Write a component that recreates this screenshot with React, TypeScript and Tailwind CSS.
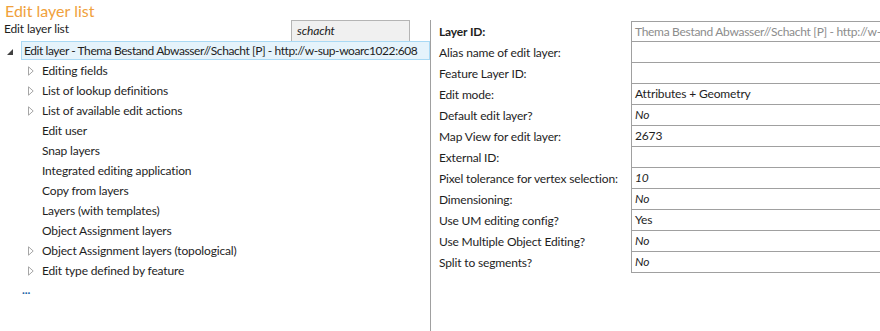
import React from 'react';

const treeItems: { label: string; arrow: boolean }[] = [
  { label: 'Editing fields', arrow: true },
  { label: 'List of lookup definitions', arrow: true },
  { label: 'List of available edit actions', arrow: true },
  { label: 'Edit user', arrow: false },
  { label: 'Snap layers', arrow: false },
  { label: 'Integrated editing application', arrow: false },
  { label: 'Copy from layers', arrow: false },
  { label: 'Layers (with templates)', arrow: false },
  { label: 'Object Assignment layers', arrow: false },
  { label: 'Object Assignment layers (topological)', arrow: true },
  { label: 'Edit type defined by feature', arrow: true },
];

type Prop = { label: string; value: string; bold?: boolean; kind?: 'ro' | 'default' | 'set' };

const props: Prop[] = [
  { label: 'Layer ID:', value: 'Thema Bestand Abwasser//Schacht [P] - http://w-sup-woarc1022:608', bold: true, kind: 'ro' },
  { label: 'Alias name of edit layer:', value: '' },
  { label: 'Feature Layer ID:', value: '' },
  { label: 'Edit mode:', value: 'Attributes + Geometry', kind: 'set' },
  { label: 'Default edit layer?', value: 'No', kind: 'default' },
  { label: 'Map View for edit layer:', value: '2673', kind: 'set' },
  { label: 'External ID:', value: '' },
  { label: 'Pixel tolerance for vertex selection:', value: '10', kind: 'default' },
  { label: 'Dimensioning:', value: 'No', kind: 'default' },
  { label: 'Use UM editing config?', value: 'Yes', kind: 'set' },
  { label: 'Use Multiple Object Editing?', value: 'No', kind: 'default' },
  { label: 'Split to segments?', value: 'No', kind: 'default' },
];

function CollapsedArrow() {
  return (
    <svg width="6" height="10" viewBox="0 0 6 10" className="shrink-0">
      <path d="M0.5 0.8 L5.2 5 L0.5 9.2 Z" fill="none" stroke="#a6a6a6" strokeWidth="1" />
    </svg>
  );
}

function ExpandedArrow() {
  return (
    <svg width="6" height="6" viewBox="0 0 6 6" className="shrink-0">
      <path d="M6 0 L6 6 L0 6 Z" fill="#404040" />
    </svg>
  );
}

export default function App() {
  return (
    <div
      className="w-[880px] h-[331px] bg-white overflow-hidden text-[12px] tracking-[-0.15px] text-[#1e1e1e]"
      style={{ fontFamily: '"Segoe UI", Lato, "Open Sans", sans-serif' }}
    >
      {/* Title */}
      <div className="h-[20px] pl-[5px] text-[16px] leading-[21px] tracking-normal text-[#f0a13c] whitespace-nowrap">
        Edit layer list
      </div>

      <div className="flex h-[311px]">
        {/* Left: tree */}
        <div className="w-[431px] shrink-0 border-r border-[#a0a0a0]">
          <div className="flex h-[21px]">
            <div className="w-[291px] pl-[4px] leading-[17px] whitespace-nowrap">Edit layer list</div>
            <div className="w-[119px] h-[22px] bg-[#f0f0f0] border border-[#b4b4b4] pl-[5px] leading-[19px] italic">
              schacht
            </div>
          </div>

          <div className="flex items-center h-[19px]">
            <div className="w-[21px] flex justify-end pr-[8px] pt-[2px]">
              <ExpandedArrow />
            </div>
            <div className="flex-1 h-[19px] bg-[#e5f3fb] border border-[#a9d9f4] pl-[2px] leading-[17px] tracking-[-0.42px] whitespace-nowrap overflow-hidden">
              Edit layer - Thema Bestand Abwasser//Schacht [P] - http://w-sup-woarc1022:608
            </div>
          </div>

          <div className="pt-[1px]">
            {treeItems.map((it) => (
              <div key={it.label} className="flex items-center h-[20px]">
                <div className="w-[42px] pl-[28px] flex items-center">{it.arrow && <CollapsedArrow />}</div>
                <div className="whitespace-nowrap leading-[20px]">{it.label}</div>
              </div>
            ))}
            <div className="h-[20px] pl-[22px] leading-[18px] text-[#1a5fa8] font-bold">...</div>
          </div>
        </div>

        {/* Right: properties */}
        <div className="flex-1 pt-[1px] overflow-hidden">
          {props.map((p, i) => (
            <div key={p.label} className="flex h-[21px]">
              <div className={`w-[200px] shrink-0 pl-[8px] leading-[21px] whitespace-nowrap ${p.bold ? 'font-bold' : ''}`}>
                {p.label}
              </div>
              <div
                className={`w-[260px] shrink-0 border-l border-b border-[#a0a0a0] pl-[3px] leading-[20px] whitespace-nowrap overflow-hidden ${
                  i === 0 ? 'border-t leading-[19px] tracking-[-0.3px]' : ''
                } ${p.kind === 'ro' ? 'text-[#8c8c8c]' : ''} ${p.kind === 'default' ? 'italic' : ''}`}
              >
                {p.value}
              </div>
            </div>
          ))}
        </div>
      </div>
    </div>
  );
}
